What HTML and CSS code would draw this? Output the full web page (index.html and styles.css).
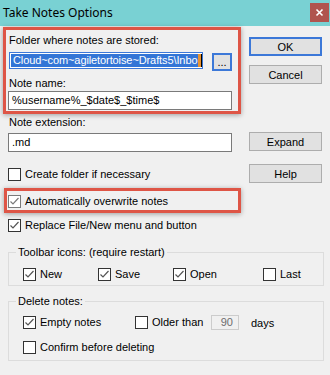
FILE: index.html
```html
<!DOCTYPE html>
<html lang="en">
	<head>
		<meta charset="utf-8"/>
		<title>Take Notes Options</title>
		<link rel="stylesheet" href="styles.css">
	</head>
	<body>
		<div class="titlebar">
			<span class="title">Take Notes Options</span>
			<span class="close"><svg width="9" height="9" viewBox="0 0 9 9"><path d="M1.5 1.5 L7.5 7.5 M7.5 1.5 L1.5 7.5" stroke="#fff" stroke-width="1.6"/></svg></span>
		</div>
		<div class="content">
			<div class="top">
				<div class="left">
					<div class="mark folder">
						<div class="label">Folder where notes are stored:</div>
						<div class="pathrow">
							<div class="edit focused"><span class="sel">Cloud~com~agiletortoise~Drafts5\Inbo<span class="caret"></span></span></div>
							<button class="btn browse">...</button>
						</div>
						<div class="label name">Note name:</div>
						<div class="edit">%username%_$date$_$time$</div>
					</div>
					<div class="label ext">Note extension:</div>
					<div class="edit">.md</div>
					<div class="check create"><span class="box"></span>Create folder if necessary</div>
					<div class="mark over">
						<div class="check"><span class="box on dim"><svg width="11" height="11" viewBox="0 0 11 11"><path d="M1.5 5.5 L4 8 L9.5 2" fill="none" stroke="#7a7a7a" stroke-width="1.2"/></svg></span>Automatically overwrite notes</div>
					</div>
					<div class="check replace"><span class="box on"><svg width="11" height="11" viewBox="0 0 11 11"><path d="M1.5 5.5 L4 8 L9.5 2" fill="none" stroke="#555" stroke-width="1.2"/></svg></span>Replace File/New menu and button</div>
				</div>
				<div class="right">
					<button class="btn default">OK</button>
					<button class="btn cancel">Cancel</button>
					<button class="btn expand">Expand</button>
					<button class="btn help">Help</button>
				</div>
			</div>
			<fieldset class="group toolbar">
				<legend>Toolbar icons: (require restart)</legend>
				<div class="icons">
					<div class="check"><span class="box on"><svg width="11" height="11" viewBox="0 0 11 11"><path d="M1.5 5.5 L4 8 L9.5 2" fill="none" stroke="#555" stroke-width="1.2"/></svg></span>New</div>
					<div class="check"><span class="box on"><svg width="11" height="11" viewBox="0 0 11 11"><path d="M1.5 5.5 L4 8 L9.5 2" fill="none" stroke="#555" stroke-width="1.2"/></svg></span>Save</div>
					<div class="check"><span class="box on"><svg width="11" height="11" viewBox="0 0 11 11"><path d="M1.5 5.5 L4 8 L9.5 2" fill="none" stroke="#555" stroke-width="1.2"/></svg></span>Open</div>
					<div class="check"><span class="box"></span>Last</div>
				</div>
			</fieldset>
			<fieldset class="group delete">
				<legend>Delete notes:</legend>
				<div class="delrow">
					<div class="check empty"><span class="box on"><svg width="11" height="11" viewBox="0 0 11 11"><path d="M1.5 5.5 L4 8 L9.5 2" fill="none" stroke="#555" stroke-width="1.2"/></svg></span>Empty notes</div>
					<div class="check older"><span class="box"></span>Older than</div>
					<div class="days-edit">90</div>
					<span class="days">days</span>
				</div>
				<div class="check confirm"><span class="box"></span>Confirm before deleting</div>
			</fieldset>
		</div>
	</body>
</html>
```

FILE: styles.css
```css
body {
	margin: 0;
	background-color: #f0f0f0;
	font-family: "Liberation Sans", Arial, sans-serif;
	font-size: 11px;
	color: #000;
}
.titlebar {
	height: 26px;
	background-color: #79d1d3;
	display: flex;
	align-items: flex-start;
}
.title {
	font-family: "Noto Sans", sans-serif;
	font-size: 12px;
	line-height: 26px;
	padding-left: 3px;
}
.close {
	margin-left: auto;
	margin-right: 1px;
	margin-top: 3px;
	width: 19px;
	height: 19px;
	background-color: #b0544e;
	display: flex;
	align-items: center;
	justify-content: center;
}
.content {
	padding-top: 1px;
}
.top {
	display: flex;
}
.left {
	width: 241px;
}
.right {
	padding-left: 8px;
	padding-top: 10px;
	display: flex;
	flex-direction: column;
}
.label {
	line-height: 13px;
	height: 13px;
	padding-left: 1px;
}
.edit {
	box-sizing: border-box;
	height: 19px;
	width: 224px;
	border: 1px solid #7a7a7a;
	background-color: #fff;
	line-height: 17px;
	padding: 0 3px;
	white-space: nowrap;
	overflow: hidden;
}
.mark {
	box-sizing: border-box;
	border: 3px solid #de5546;
	box-shadow: 0 1px 5px rgba(0, 0, 0, 0.35);
}
.folder {
	margin-left: 3px;
	width: 238px;
	padding: 4px 0 1px 2px;
}
.pathrow {
	display: flex;
	margin-top: 5px;
	padding-left: 1px;
	height: 19px;
}
.edit.focused {
	width: 194px;
	height: 17px;
	border: 1px solid #3c78d8;
	padding: 1px;
	line-height: 13px;
}
.sel {
	display: block;
	background-color: #3375d6;
	color: #fff;
	height: 13px;
	padding-left: 2px;
	letter-spacing: -0.1px;
}
.caret {
	display: inline-block;
	width: 3px;
	height: 13px;
	vertical-align: top;
	margin-left: 1px;
	background-color: #e8912f;
	border-right: 1px solid #000;
}
.label.name {
	margin-top: 6px;
}
.label.name + .edit {
	margin-top: 1px;
}
.left > .label, .left > .edit, .left > .check {
	margin-left: 8px;
}
.label.ext {
	margin-top: 2px;
}
.label.ext + .edit {
	margin-top: 4px;
}
.btn {
	box-sizing: border-box;
	width: 73px;
	height: 19px;
	background-color: #e1e1e1;
	border: 1px solid #adadad;
	font-family: "Liberation Sans", Arial, sans-serif;
	font-size: 11px;
	padding: 0;
	color: #000;
}
.btn.default {
	border: 2px solid #3c78d8;
}
.btn.cancel {
	margin-top: 9px;
}
.btn.expand {
	margin-top: 48px;
}
.btn.help {
	margin-top: 13px;
}
.btn.browse {
	width: 20px;
	height: 18px;
	margin-top: 1px;
	margin-left: 9px;
	border: 2px solid #3c78d8;
	line-height: 10px;
}
.check {
	display: flex;
	align-items: center;
	height: 13px;
	line-height: 13px;
	white-space: nowrap;
}
.box {
	box-sizing: border-box;
	width: 13px;
	height: 13px;
	border: 1px solid #333;
	background-color: #fff;
	margin-right: 4px;
	flex: none;
	display: flex;
	align-items: center;
	justify-content: center;
}
.box.dim {
	border-color: #7a7a7a;
}
.check.create {
	margin-top: 16px;
}
.over {
	margin-top: 7px;
	margin-left: 4px;
	width: 237px;
	height: 25px;
	padding: 4px 0 0 1px;
}
.check.replace {
	margin-top: 6px;
}
.group {
	margin: 14px 0 0 8px;
	width: 316px;
	box-sizing: border-box;
	border: 1px solid #dcdcdc;
	padding: 0 0 4px 14px;
}
.group legend {
	margin-left: -7px;
	padding: 0 2px;
	line-height: 13px;
}
.icons {
	margin-top: 9px;
	display: grid;
	grid-template-columns: 75px 75px 90px auto;
}
.group.delete {
	margin-top: 9px;
	padding-bottom: 6px;
}
.delrow {
	display: flex;
	align-items: center;
	margin-top: 8px;
	height: 13px;
}
.check.empty {
	width: 112px;
}
.check.older {
	width: 76px;
}
.days-edit {
	box-sizing: border-box;
	width: 28px;
	height: 15px;
	border: 1px solid #cccccc;
	color: #6d6d6d;
	text-align: right;
	padding-right: 5px;
	line-height: 13px;
}
.days {
	margin-left: 12px;
}
.check.confirm {
	margin-top: 12px;
}
```
